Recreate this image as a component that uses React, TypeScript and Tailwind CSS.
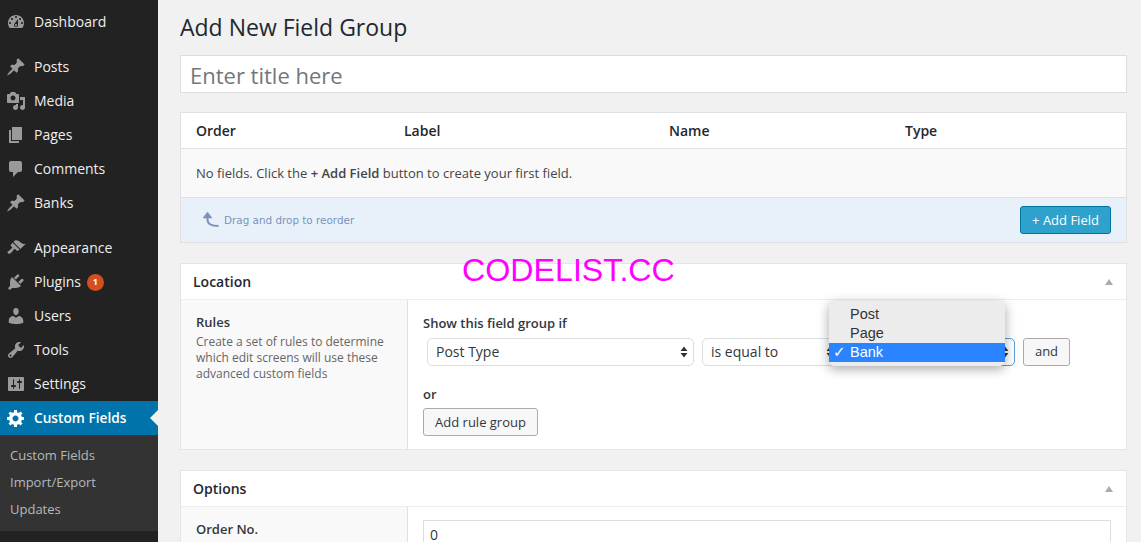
import { FC, ReactNode } from "react";

const icons: Record<string, string> = {
  dashboard:
    "M3.76 16h12.48c1.1-1.37 1.76-3.11 1.76-5 0-4.42-3.58-8-8-8s-8 3.58-8 8c0 1.89.66 3.63 1.76 5zM10 4c.55 0 1 .45 1 1s-.45 1-1 1-1-.45-1-1 .45-1 1-1zM6 6c.55 0 1 .45 1 1s-.45 1-1 1-1-.45-1-1 .45-1 1-1zm8 0c.55 0 1 .45 1 1s-.45 1-1 1-1-.45-1-1 .45-1 1-1zm-5.37 5.55L12 7v6c0 1.1-.9 2-2 2s-2-.9-2-2c0-.57.24-1.08.63-1.45zM4 10c.55 0 1 .45 1 1s-.45 1-1 1-1-.45-1-1 .45-1 1-1zm12 0c.55 0 1 .45 1 1s-.45 1-1 1-1-.45-1-1 .45-1 1-1zm-5 3c0-.55-.45-1-1-1s-1 .45-1 1 .45 1 1 1 1-.45 1-1z",
  pin: "M10.44 3.02l1.82-1.82 6.36 6.35-1.83 1.82c-1.05-.68-2.48-.57-3.41.36l-.75.75c-.92.93-1.04 2.35-.35 3.41l-1.83 1.82-2.41-2.41-2.8 2.79c-.42.42-3.38 2.71-3.8 2.29s1.86-3.39 2.28-3.81l2.79-2.79L4.1 9.36l1.83-1.82c1.05.69 2.48.57 3.41-.36l.75-.75c.93-.92 1.05-2.35.35-3.41z",
  media:
    "M13 11V4c0-.55-.45-1-1-1h-1.67L9 1H5L3.67 3H2c-.55 0-1 .45-1 1v7c0 .55.45 1 1 1h10c.55 0 1-.45 1-1zM7 4.5c1.38 0 2.5 1.12 2.5 2.5S8.38 9.5 7 9.5 4.5 8.38 4.5 7 5.62 4.5 7 4.5zM14 6h5v10.5c0 1.38-1.12 2.5-2.5 2.5S14 17.88 14 16.5s1.12-2.5 2.5-2.5c.17 0 .34.02.5.05V9h-3V6zm-4 8.05V13h2v3.5c0 1.38-1.12 2.5-2.5 2.5S7 17.88 7 16.5 8.12 14 9.5 14c.17 0 .34.02.5.05z",
  pages: "M6 15V2h10v13H6zm-1 1h8v2H3V5h2v11z",
  comments:
    "M5 2h9c1.1 0 2 .9 2 2v7c0 1.1-.9 2-2 2h-2l-5 5v-5H5c-1.1 0-2-.9-2-2V4c0-1.1.9-2 2-2z",
  appearance:
    "M14.48 11.06L7.41 3.99l1.5-1.5c.5-.56 2.3-.47 3.51.32 1.21.8 1.43 1.28 2.91 2.1 1.18.64 2.45 1.26 4.45.85zm-.71.71L6.7 4.7 4.93 6.47c-.39.39-.39 1.02 0 1.41l1.06 1.06c.39.39.39 1.03 0 1.42-.6.6-1.43 1.11-2.21 1.69-.35.26-.7.53-1.01.84C1.43 13.23 1 14.3 2 15.3c1.01 1 2.07.57 3.44-.74.31-.31.58-.66.84-1.01.58-.78 1.09-1.61 1.69-2.21.39-.39 1.02-.39 1.41 0l1.06 1.06c.39.39 1.02.39 1.41 0z",
  plugins:
    "M13.11 4.36L9.87 7.6 8 5.73l3.24-3.24c.35-.34 1.05-.2 1.56.32.52.51.66 1.21.31 1.55zm-8 1.77l.91-1.12 9.01 9.01-1.19.84c-.71.71-2.63 1.16-3.82 1.16H6.14L4.9 17.26c-.59.59-1.54.59-2.12 0-.59-.58-.59-1.53 0-2.12l1.24-1.24v-3.88c0-1.13.4-3.19 1.09-3.89zm7.26 3.97l3.24-3.24c.34-.35 1.04-.21 1.55.31.52.51.66 1.21.31 1.55l-3.24 3.25z",
  users:
    "M10 9.25c-2.27 0-2.73-3.44-2.73-3.44C7 4.02 7.82 2 9.97 2c2.16 0 2.98 2.02 2.71 3.81 0 0-.41 3.44-2.68 3.44zm0 2.57L12.72 10c2.39 0 4.52 2.33 4.52 4.53v2.49s-3.65 1.13-7.24 1.13c-3.65 0-7.24-1.13-7.24-1.13v-2.49c0-2.25 1.94-4.48 4.47-4.48z",
  tools:
    "M16.68 9.77c-1.34 1.34-3.3 1.67-4.95.99l-5.41 6.52c-.99.99-2.59.99-3.58 0s-.99-2.59 0-3.57l6.52-5.42c-.68-1.65-.35-3.61.99-4.95 1.28-1.28 3.12-1.62 4.72-1.06l-2.89 2.89 2.82 2.82 2.86-2.87c.53 1.58.18 3.39-1.08 4.65zM3.81 16.21c.4.39 1.04.39 1.43 0 .4-.4.4-1.04 0-1.43-.39-.4-1.03-.4-1.43 0-.39.39-.39 1.03 0 1.43z",
  settings:
    "M18 16V4c0-.55-.45-1-1-1H3c-.55 0-1 .45-1 1v12c0 .55.45 1 1 1h14c.55 0 1-.45 1-1zM8 11h1c.55 0 1 .45 1 1s-.45 1-1 1H8v1.5c0 .28-.22.5-.5.5s-.5-.22-.5-.5V13H6c-.55 0-1-.45-1-1s.45-1 1-1h1V5.5c0-.28.22-.5.5-.5s.5.22.5.5V11zm5-2h-1c-.55 0-1-.45-1-1s.45-1 1-1h1V5.5c0-.28.22-.5.5-.5s.5.22.5.5V7h1c.55 0 1 .45 1 1s-.45 1-1 1h-1v5.5c0 .28-.22.5-.5.5s-.5-.22-.5-.5V9z",
  generic:
    "M18 12h-2.18c-.17.7-.44 1.35-.81 1.93l1.54 1.54-2.1 2.1-1.54-1.54c-.58.36-1.23.63-1.91.79V19H8v-2.18c-.68-.16-1.33-.43-1.91-.79l-1.54 1.54-2.12-2.12 1.54-1.54c-.36-.58-.63-1.23-.79-1.91H1V9.03h2.17c.16-.7.44-1.35.8-1.94L2.43 5.55l2.1-2.1 1.54 1.54c.58-.37 1.24-.64 1.93-.81V2h3v2.18c.68.16 1.33.43 1.91.79l1.54-1.54 2.12 2.12-1.54 1.54c.36.59.64 1.24.8 1.94H18V12zm-8.5 1.5c1.66 0 3-1.34 3-3s-1.34-3-3-3-3 1.34-3 3 1.34 3 3 3z",
};

const MenuItem: FC<{ icon: string; label: string; children?: ReactNode }> = ({
  icon,
  label,
  children,
}) => (
  <div className="flex h-[34px] items-center pl-[6px] text-[14px] text-[#eeeeee]">
    <svg viewBox="0 0 20 20" className="h-5 w-5 shrink-0 fill-[#9a9a9a]">
      <path d={icons[icon]} />
    </svg>
    <span className="ml-[8px] pb-[2px]">{label}</span>
    {children}
  </div>
);

const Sidebar = () => (
  <div className="flex h-full w-[158px] shrink-0 flex-col bg-[#222222] pt-[5px]">
    <MenuItem icon="dashboard" label="Dashboard" />
    <div className="mt-[11px]">
      <MenuItem icon="pin" label="Posts" />
      <MenuItem icon="media" label="Media" />
      <MenuItem icon="pages" label="Pages" />
      <MenuItem icon="comments" label="Comments" />
      <MenuItem icon="pin" label="Banks" />
    </div>
    <div className="mt-[11px]">
      <MenuItem icon="appearance" label="Appearance" />
      <MenuItem icon="plugins" label="Plugins">
        <span className="ml-[6px] flex h-[17px] w-[17px] items-center justify-center rounded-full bg-[#d54e21] text-[9px] font-bold text-white">
          1
        </span>
      </MenuItem>
      <MenuItem icon="users" label="Users" />
      <MenuItem icon="tools" label="Tools" />
      <MenuItem icon="settings" label="Settings" />
    </div>
    <div className="relative flex h-[34px] items-center bg-[#0073aa] pl-[6px] text-[13.7px] font-semibold text-white">
      <svg viewBox="0 0 20 20" className="h-5 w-5 shrink-0 fill-white">
        <path d={icons.generic} />
      </svg>
      <span className="ml-[8px]">Custom Fields</span>
      <span className="absolute right-0 top-[9px] h-0 w-0 border-y-[8px] border-r-[8px] border-y-transparent border-r-[#f1f1f1]" />
    </div>
    <div className="bg-[#333333] pb-[8px] pt-[7px] text-[13px] text-[#b4b9be]">
      <div className="flex h-[27px] items-center pl-[10px]">Custom Fields</div>
      <div className="flex h-[27px] items-center pl-[10px]">Import/Export</div>
      <div className="flex h-[27px] items-center pl-[10px]">Updates</div>
    </div>
  </div>
);

const SelectArrows = () => (
  <svg viewBox="0 0 8 12" className="h-3 w-2 shrink-0 fill-[#333333]">
    <path d="M4 0.5L7.5 5H0.5zM4 11.5L0.5 7H7.5z" />
  </svg>
);

const FakeSelect: FC<{ label?: string; className: string }> = ({ label, className }) => (
  <div
    className={`flex h-7 items-center justify-between rounded-[5px] border bg-white pl-[8px] pr-[5px] text-[14px] text-[#32373c] ${className}`}
  >
    <span className="pb-[2px]">{label}</span>
    <SelectArrows />
  </div>
);

const PanelHeader: FC<{ title: string }> = ({ title }) => (
  <div className="flex h-[36px] items-center justify-between border-b border-[#eeeeee] pl-[12px] pr-[13px]">
    <span className="text-[14px] font-semibold text-[#23282d]">{title}</span>
    <span className="h-0 w-0 border-x-[4px] border-b-[6px] border-x-transparent border-b-[#aaaaaa]" />
  </div>
);

const FieldsBox = () => (
  <div className="mt-[19px] border border-[#e1e1e1] bg-white">
    <div className="grid h-[35px] grid-cols-[208px_265px_236px_1fr] items-center px-[15px] text-[14px] font-semibold text-[#23282d]">
      <span>Order</span>
      <span>Label</span>
      <span>Name</span>
      <span>Type</span>
    </div>
    <div className="flex h-[50px] items-center border-y border-[#e1e1e1] bg-[#f9f9f9] px-[15px] pt-[2px] text-[13px] text-[#444444]">
      <span>
        No fields. Click the <strong className="font-semibold">+ Add Field</strong> button to
        create your first field.
      </span>
    </div>
    <div className="flex h-[44px] items-center justify-between bg-[#e8f1f9] pl-[21px] pr-[15px]">
      <div className="flex items-center">
        <svg viewBox="0 0 18 18" className="mb-[1px] h-[18px] w-[18px] fill-none stroke-[#7a93bd]">
          <path d="M5.5 2.5V9c0 4 3 6 11 6" strokeWidth="2" />
          <path d="M1 7L5.5 1L10 7z" fill="#7a93bd" strokeWidth="0.5" />
        </svg>
        <span className="ml-[4px] mt-[1px] font-['DejaVu_Sans',sans-serif] text-[10.4px] text-[#7a93bd]">
          Drag and drop to reorder
        </span>
      </div>
      <button className="flex h-7 w-[91px] items-center justify-center rounded-[3px] border border-[#0074a2] bg-[#2ea2cc] pt-[1px] text-[13px] text-white">
        + Add Field
      </button>
    </div>
  </div>
);

const LocationBox = () => (
  <div className="mt-[20px] border border-[#e5e5e5] bg-white">
    <PanelHeader title="Location" />
    <div className="flex h-[149px]">
      <div className="w-[227px] border-r border-[#e1e1e1] bg-[#f9f9f9] pl-[15px] pr-[20px] pt-[14px] text-[12px] leading-[16px] text-[#666666]">
        <div className="text-[13px] font-semibold leading-[17px] text-[#32373c]">Rules</div>
        <p className="mt-[3px]">
          Create a set of rules to determine which edit screens will use these advanced custom
          fields
        </p>
      </div>
      <div className="flex-1 pl-[15px] pt-[14px]">
        <div className="text-[13px] font-semibold leading-[18px] text-[#32373c]">
          Show this field group if
        </div>
        <div className="ml-[4px] mt-[6px] flex items-center gap-[8px]">
          <FakeSelect label="Post Type" className="w-[267px] border-[#dddddd]" />
          <FakeSelect label="is equal to" className="w-[138px] border-[#dddddd]" />
          <FakeSelect className="ml-[-10px] w-[177px] border-[#5b9dd9]" />
          <button className="h-7 w-[47px] rounded-[3px] border border-[#aaaaaa] bg-[#f7f7f7] text-[13px] text-[#32373c]">
            and
          </button>
        </div>
        <div className="mt-[19px] text-[13px] font-semibold leading-[18px] text-[#32373c]">or</div>
        <button className="mt-[5px] h-7 w-[115px] rounded-[3px] border border-[#aaaaaa] bg-[#f7f7f7] pt-[1px] text-[13px] text-[#32373c]">
          Add rule group
        </button>
      </div>
    </div>
  </div>
);

const OptionsBox = () => (
  <div className="mt-[20px] border border-[#e5e5e5] bg-white">
    <PanelHeader title="Options" />
    <div className="flex h-[60px]">
      <div className="w-[227px] border-r border-[#e1e1e1] bg-[#f9f9f9] pl-[15px] pt-[13px] text-[13px] font-semibold text-[#32373c]">
        Order No.
      </div>
      <div className="flex-1 pl-[15px] pr-[15px] pt-[13px]">
        <div className="flex h-7 items-center border border-[#dddddd] bg-white px-[6px] text-[14px] text-[#32373c]">
          0
        </div>
      </div>
    </div>
  </div>
);

const App = () => {
  return (
    <div className="relative flex h-[542px] w-[1141px] overflow-hidden bg-[#f1f1f1] font-['Open_Sans',sans-serif]">
      <Sidebar />
      <div className="flex-1 pl-[22px] pr-[14px]">
        <h1 className="flex h-[55px] items-center pb-[1px] text-[23px] text-[#23282d]">
          Add New Field Group
        </h1>
        <input
          placeholder="Enter title here"
          className="block h-[38px] w-full border border-[#dddddd] bg-white px-[9px] pt-[1px] text-[22px] outline-none placeholder:text-[#72777c]"
        />
        <FieldsBox />
        <LocationBox />
        <OptionsBox />
      </div>

      <div className="absolute left-[462px] top-[250px] font-['Liberation_Sans',sans-serif] text-[32.2px] leading-[40px] text-[#ff00ff]">
        CODELIST.CC
      </div>

      <div className="absolute left-[829px] top-[301px] h-[65px] w-[176px] rounded-[5px] bg-[#ececec] pt-[4px] font-['Liberation_Sans',sans-serif] text-[14.5px] leading-[19px] text-[#333333] shadow-[0_3px_12px_rgba(0,0,0,0.35)]">
        <div className="pl-[21px]">Post</div>
        <div className="pl-[21px]">Page</div>
        <div className="relative bg-[#2a84ff] pl-[21px] text-white">
          <span className="absolute left-[4px] font-['DejaVu_Sans',sans-serif] text-[15px] font-bold">✓</span>
          Bank
        </div>
      </div>
    </div>
  );
};

export default App;
